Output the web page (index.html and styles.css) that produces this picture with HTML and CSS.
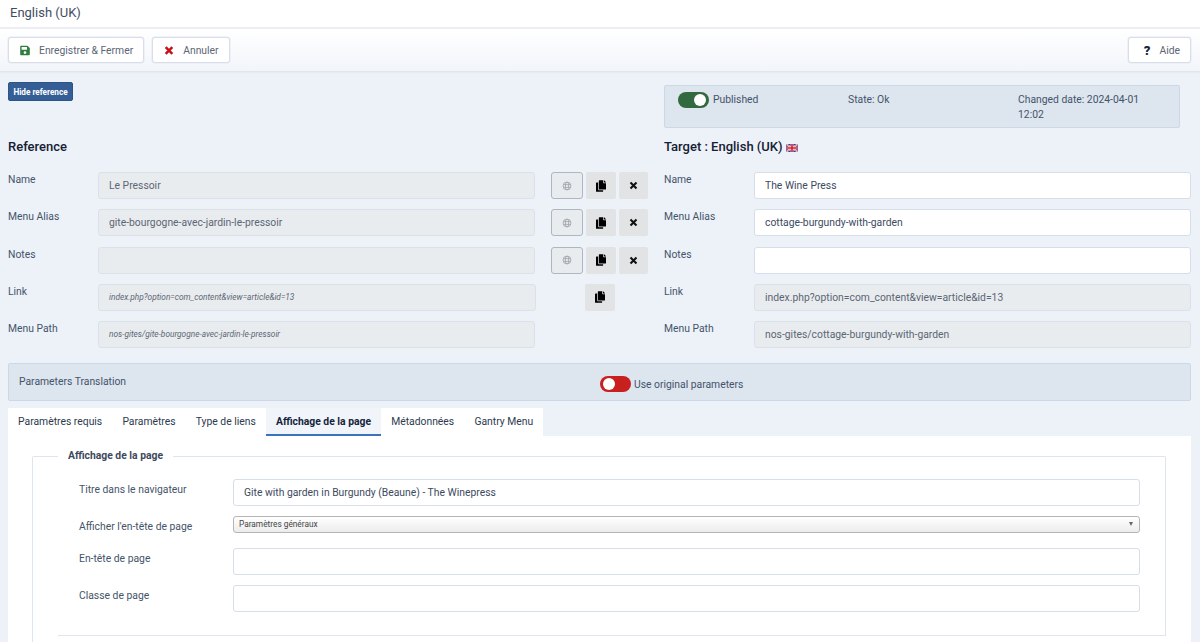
FILE: index.html
```html
<!DOCTYPE html>
<html lang="fr">
<head>
  <meta charset="UTF-8">
  <meta name="viewport" content="width=device-width, initial-scale=1.0">
  <title>English (UK)</title>
  <link rel="stylesheet" href="styles.css">
</head>
<body>
  <svg class="sprite" aria-hidden="true">
    <symbol id="i-copy" viewBox="0 0 448 512"><path d="M320 448v40c0 13.255-10.745 24-24 24H24c-13.255 0-24-10.745-24-24V120c0-13.255 10.745-24 24-24h72v296c0 30.879 25.121 56 56 56h168zm0-344V0H152c-13.255 0-24 10.745-24 24v368c0 13.255 10.745 24 24 24h272c13.255 0 24-10.745 24-24V128H344c-13.200 0-24-10.800-24-24zm120.971-31.029L375.029 7.029A24 24 0 0 0 358.059 0H352v96h96v-6.059a24 24 0 0 0-7.029-16.970z"/></symbol>
    <symbol id="i-globe" viewBox="0 0 16 16"><g fill="none" stroke="currentColor" stroke-width="1.400"><circle cx="8" cy="8" r="6.300"/><ellipse cx="8" cy="8" rx="2.700" ry="6.300"/><path d="M2 5.800h12M2 10.200h12"/></g></symbol>
    <symbol id="i-x" viewBox="0 0 12 12"><path d="M2 2l8 8M10 2l-8 8" stroke="currentColor" stroke-width="2.800" fill="none"/></symbol>
  </svg>

  <header class="title-bar">English (UK)</header>

  <div class="toolbar">
    <button class="tool-btn">
      <svg class="tool-icon" viewBox="0 0 448 512" fill="#2f7d3e"><path d="M433.941 129.941l-83.882-83.882A48 48 0 0 0 316.118 32H48C21.490 32 0 53.490 0 80v352c0 26.510 21.490 48 48 48h352c26.510 0 48-21.490 48-48V163.882a48 48 0 0 0-14.059-33.941zM224 416c-35.346 0-64-28.654-64-64 0-35.346 28.654-64 64-64s64 28.654 64 64c0 35.346-28.654 64-64 64zm96-304.520V212c0 6.627-5.373 12-12 12H76c-6.627 0-12-5.373-12-12V108c0-6.627 5.373-12 12-12h228.520c3.183 0 6.235 1.264 8.485 3.515l3.480 3.480A11.996 11.996 0 0 1 320 111.480z"/></svg>
      Enregistrer &amp; Fermer
    </button>
    <button class="tool-btn">
      <svg class="tool-icon" viewBox="0 0 12 12" stroke="#c8101a" stroke-width="3" fill="none"><path d="M2 2l8 8M10 2l-8 8"/></svg>
      Annuler
    </button>
    <button class="tool-btn help-btn"><span class="help-mark">?</span>Aide</button>
  </div>

  <main class="content">
    <div class="top-row">
      <div class="top-left"><button class="hide-btn">Hide reference</button></div>
      <div class="status-box">
        <div class="status-pub"><span class="switch switch-on"></span>Published</div>
        <div class="status-state">State: Ok</div>
        <div class="status-date">Changed date: 2024-04-01 12:02</div>
      </div>
    </div>

    <div class="columns">
      <section class="col">
        <h2 class="col-title">Reference</h2>
        <div class="row">
          <label>Name</label>
          <div class="field ro">Le Pressoir</div>
          <div class="actions">
            <button class="act act-globe"><svg class="globe-icon"><use href="#i-globe"/></svg></button>
            <button class="act"><svg class="copy-icon"><use href="#i-copy"/></svg></button>
            <button class="act act-x"><svg class="x-icon"><use href="#i-x"/></svg></button>
          </div>
        </div>
        <div class="row">
          <label>Menu Alias</label>
          <div class="field ro">gite-bourgogne-avec-jardin-le-pressoir</div>
          <div class="actions">
            <button class="act act-globe"><svg class="globe-icon"><use href="#i-globe"/></svg></button>
            <button class="act"><svg class="copy-icon"><use href="#i-copy"/></svg></button>
            <button class="act act-x"><svg class="x-icon"><use href="#i-x"/></svg></button>
          </div>
        </div>
        <div class="row">
          <label>Notes</label>
          <div class="field ro"></div>
          <div class="actions">
            <button class="act act-globe"><svg class="globe-icon"><use href="#i-globe"/></svg></button>
            <button class="act"><svg class="copy-icon"><use href="#i-copy"/></svg></button>
            <button class="act act-x"><svg class="x-icon"><use href="#i-x"/></svg></button>
          </div>
        </div>
        <div class="row">
          <label>Link</label>
          <div class="field ro small-italic">index.php?option=com_content&amp;view=article&amp;id=13</div>
          <div class="actions actions-center">
            <button class="act"><svg class="copy-icon"><use href="#i-copy"/></svg></button>
          </div>
        </div>
        <div class="row">
          <label>Menu Path</label>
          <div class="field ro small-italic">nos-gites/gite-bourgogne-avec-jardin-le-pressoir</div>
          <div class="actions"></div>
        </div>
      </section>

      <section class="col col-target">
        <h2 class="col-title">Target : English (UK)
          <svg class="flag" viewBox="0 0 60 40"><rect width="60" height="40" fill="#27408b"/><path d="M0 0l60 40M60 0L0 40" stroke="#fff" stroke-width="8"/><path d="M0 0l60 40M60 0L0 40" stroke="#d8182c" stroke-width="3"/><path d="M30 0v40M0 20h60" stroke="#fff" stroke-width="13"/><path d="M30 0v40M0 20h60" stroke="#d8182c" stroke-width="8"/></svg>
        </h2>
        <div class="row">
          <label>Name</label>
          <div class="field">The Wine Press</div>
        </div>
        <div class="row">
          <label>Menu Alias</label>
          <div class="field">cottage-burgundy-with-garden</div>
        </div>
        <div class="row">
          <label>Notes</label>
          <div class="field"></div>
        </div>
        <div class="row">
          <label>Link</label>
          <div class="field ro">index.php?option=com_content&amp;view=article&amp;id=13</div>
        </div>
        <div class="row">
          <label>Menu Path</label>
          <div class="field ro">nos-gites/cottage-burgundy-with-garden</div>
        </div>
      </section>
    </div>

    <div class="params-bar">
      <span class="params-title">Parameters Translation</span>
      <span class="params-toggle"><span class="switch switch-off"></span>Use original parameters</span>
    </div>

    <nav class="tabs">
      <a class="tab">Paramètres requis</a>
      <a class="tab">Paramètres</a>
      <a class="tab">Type de liens</a>
      <a class="tab active">Affichage de la page</a>
      <a class="tab">Métadonnées</a>
      <a class="tab">Gantry Menu</a>
    </nav>

    <div class="panel">
      <fieldset class="page-set">
        <legend>Affichage de la page</legend>
        <div class="form-row">
          <label>Titre dans le navigateur</label>
          <div class="field">Gite with garden in Burgundy (Beaune) - The Winepress</div>
        </div>
        <div class="form-row form-row-select">
          <label>Afficher l'en-tête de page</label>
          <div class="select-box">Paramètres généraux<span class="caret"></span></div>
        </div>
        <div class="form-row">
          <label>En-tête de page</label>
          <div class="field"></div>
        </div>
        <div class="form-row">
          <label>Classe de page</label>
          <div class="field"></div>
        </div>
        <div class="set-end"></div>
      </fieldset>
    </div>
  </main>
</body>
</html>
```

FILE: styles.css
```css
html, body {
  margin: 0;
  height: 642px;
  overflow: hidden;
}
body {
  font-family: Roboto, 'Liberation Sans', Arial, sans-serif;
  font-size: 10.35px;
  color: #44546a;
  background-color: #edf2f9;
}
.sprite {
  display: none;
}
.title-bar {
  height: 27px;
  line-height: 26px;
  padding-left: 10px;
  font-size: 13px;
  color: #3f4d63;
  background: white;
  border-bottom: 2px solid #ebeff5;
}
.toolbar {
  display: flex;
  gap: 8px;
  height: 43px;
  padding: 8px 9px 0 8px;
  box-sizing: border-box;
  background: linear-gradient(#ffffff, #f2f5fa);
  border-bottom: 1px solid #dfe6f0;
  box-shadow: 0 1px 2px rgba(0,0,0,0.04);
}
.tool-btn {
  display: flex;
  align-items: center;
  height: 26px;
  padding: 0 10px 0 11px;
  background: white;
  border: 1px solid #d8dfea;
  border-radius: 3px;
  font-family: inherit;
  font-size: 10.35px;
  color: #5c6675;
  box-shadow: 0 0 0 0.5px #e4e9f1;
}
.tool-icon {
  width: 10px;
  height: 11px;
  margin-right: 9px;
}
.help-btn {
  margin-left: auto;
  padding: 0 10px 0 15px;
}
.help-mark {
  font-weight: 900;
  font-size: 13px;
  color: #15213a;
  margin-right: 9px;
}
.content {
  padding: 13px 9px 0 8px;
}
.top-row {
  display: flex;
  height: 43px;
}
.top-left {
  width: 656px;
}
.hide-btn {
  display: block;
  height: 19px;
  width: 65px;
  padding: 0;
  background-color: #355e96;
  border: 1px solid #2e5385;
  border-radius: 2px;
  font-family: inherit;
  font-size: 8.2px;
  font-weight: 700;
  color: white;
  margin-top: -3px;
}
.status-box {
  display: flex;
  width: 516px;
  box-sizing: border-box;
  padding: 6px 0 0 13px;
  background-color: #dde5ef;
  border: 1px solid #cdd8e6;
  border-radius: 2px;
  line-height: 15px;
}
.status-pub {
  display: flex;
  width: 170px;
}
.status-state {
  width: 170px;
}
.status-date {
  width: 130px;
}
.switch {
  display: inline-block;
  position: relative;
  width: 31px;
  height: 16px;
  border-radius: 8px;
  margin-right: 4px;
  flex-shrink: 0;
}
.switch::after {
  content: "";
  position: absolute;
  top: 2px;
  width: 12px;
  height: 12px;
  border-radius: 50%;
  background: white;
}
.switch-on {
  background-color: #33693f;
}
.switch-on::after {
  right: 3px;
}
.switch-off {
  background-color: #c81f1f;
}
.switch-off::after {
  left: 3px;
}
.columns {
  display: flex;
  justify-content: space-between;
}
.col {
  width: 640px;
}
.col-target {
  width: 527px;
}
.col-title {
  margin: 11px 0 0;
  height: 33px;
  font-size: 13px;
  font-weight: 500;
  line-height: 16px;
  color: #162033;
}
.flag {
  width: 12px;
  height: 8px;
  vertical-align: -1px;
}
.row {
  display: flex;
  height: 37.3px;
}
.row label {
  width: 90px;
  flex-shrink: 0;
  padding-top: 1px;
  line-height: 13px;
}
.field {
  flex: 1;
  height: 27px;
  box-sizing: border-box;
  padding: 0 10px;
  line-height: 25px;
  color: #3d4a5e;
  background: white;
  border: 1px solid #d5deea;
  border-radius: 3px;
  white-space: nowrap;
  overflow: hidden;
}
.field.ro {
  background-color: #e9ecef;
  color: #5b6674;
  border-color: #dbe1e8;
}
.field.small-italic {
  font-style: italic;
  font-size: 8.3px;
}
.actions {
  display: flex;
  gap: 3px;
  width: 97px;
  margin-left: 16px;
  flex-shrink: 0;
}
.actions-center {
  justify-content: center;
  margin-left: 15px;
}
.act {
  display: flex;
  align-items: center;
  justify-content: center;
  width: 30px;
  height: 27px;
  padding: 0;
  color: #111;
  background-color: #e2e3e4;
  border: none;
  border-radius: 2px;
}
.act-globe {
  width: 32px;
  color: #a3a8ae;
  background-color: #e9ecef;
  border: 1px solid #aeb6c1;
  border-radius: 3px;
}
.act-x {
  width: 29px;
}
.copy-icon {
  width: 10px;
  height: 12px;
}
.globe-icon {
  width: 10px;
  height: 10px;
}
.x-icon {
  width: 9px;
  height: 9px;
}
.params-bar {
  display: flex;
  align-items: center;
  height: 38px;
  box-sizing: border-box;
  margin-top: 5px;
  padding: 0 10px 2px;
  background-color: #dde5ef;
  border: 1px solid #cdd8e6;
  border-radius: 2px;
}
.params-title {
  width: 581px;
}
.params-toggle {
  display: flex;
  align-items: center;
  margin-top: 6px;
}
.params-toggle .switch {
  margin-right: 3px;
}
.tabs {
  display: flex;
  width: fit-content;
  margin-top: 7px;
  background: white;
  height: 28px;
}
.tab {
  padding: 0 10.1px;
  line-height: 27px;
  color: #2c3a4f;
  box-sizing: border-box;
  height: 28px;
}
.tab.active {
  font-weight: 700;
  color: #16243b;
  background-color: #f1f5fa;
  border-bottom: 2px solid #3b72c0;
}
.panel {
  background: white;
  height: 206px;
  padding: 13px 25px 0 24px;
  box-sizing: border-box;
}
.page-set {
  position: relative;
  margin: 0;
  padding: 16px 25px 0 46px;
  border: 1px solid #dce5f0;
  border-bottom: none;
  border-radius: 2px 2px 0 0;
  height: 187px;
  box-sizing: border-box;
}
/* le trait gauche descend plus bas que le trait du bas */
.page-set::after {
  content: "";
  position: absolute;
  left: -1px;
  top: 100%;
  width: 1px;
  height: 8px;
  background-color: #dce5f0;
}
.page-set legend {
  margin-left: -21px;
  padding: 0 10px;
  font-weight: 700;
  line-height: 14px;
  color: #3d4a5e;
}
.form-row {
  display: flex;
  height: 37px;
}
.form-row-select {
  height: 32px;
}
.form-row label {
  width: 154px;
  flex-shrink: 0;
  padding-top: 4px;
  line-height: 14px;
}
.select-box {
  position: relative;
  flex: 1;
  height: 17px;
  box-sizing: border-box;
  padding-left: 5px;
  line-height: 15px;
  font-size: 8.3px;
  color: #444;
  background: linear-gradient(#ffffff, #ececec);
  border: 1px solid #b5b5b5;
  border-radius: 3px;
}
.caret {
  position: absolute;
  right: 6px;
  top: 5px;
  border-left: 2.5px solid transparent;
  border-right: 2.5px solid transparent;
  border-top: 4px solid #666;
}
.set-end {
  margin: 13px -25px 0 -21px;
  border-bottom: 1px solid #dce5f0;
}
```
